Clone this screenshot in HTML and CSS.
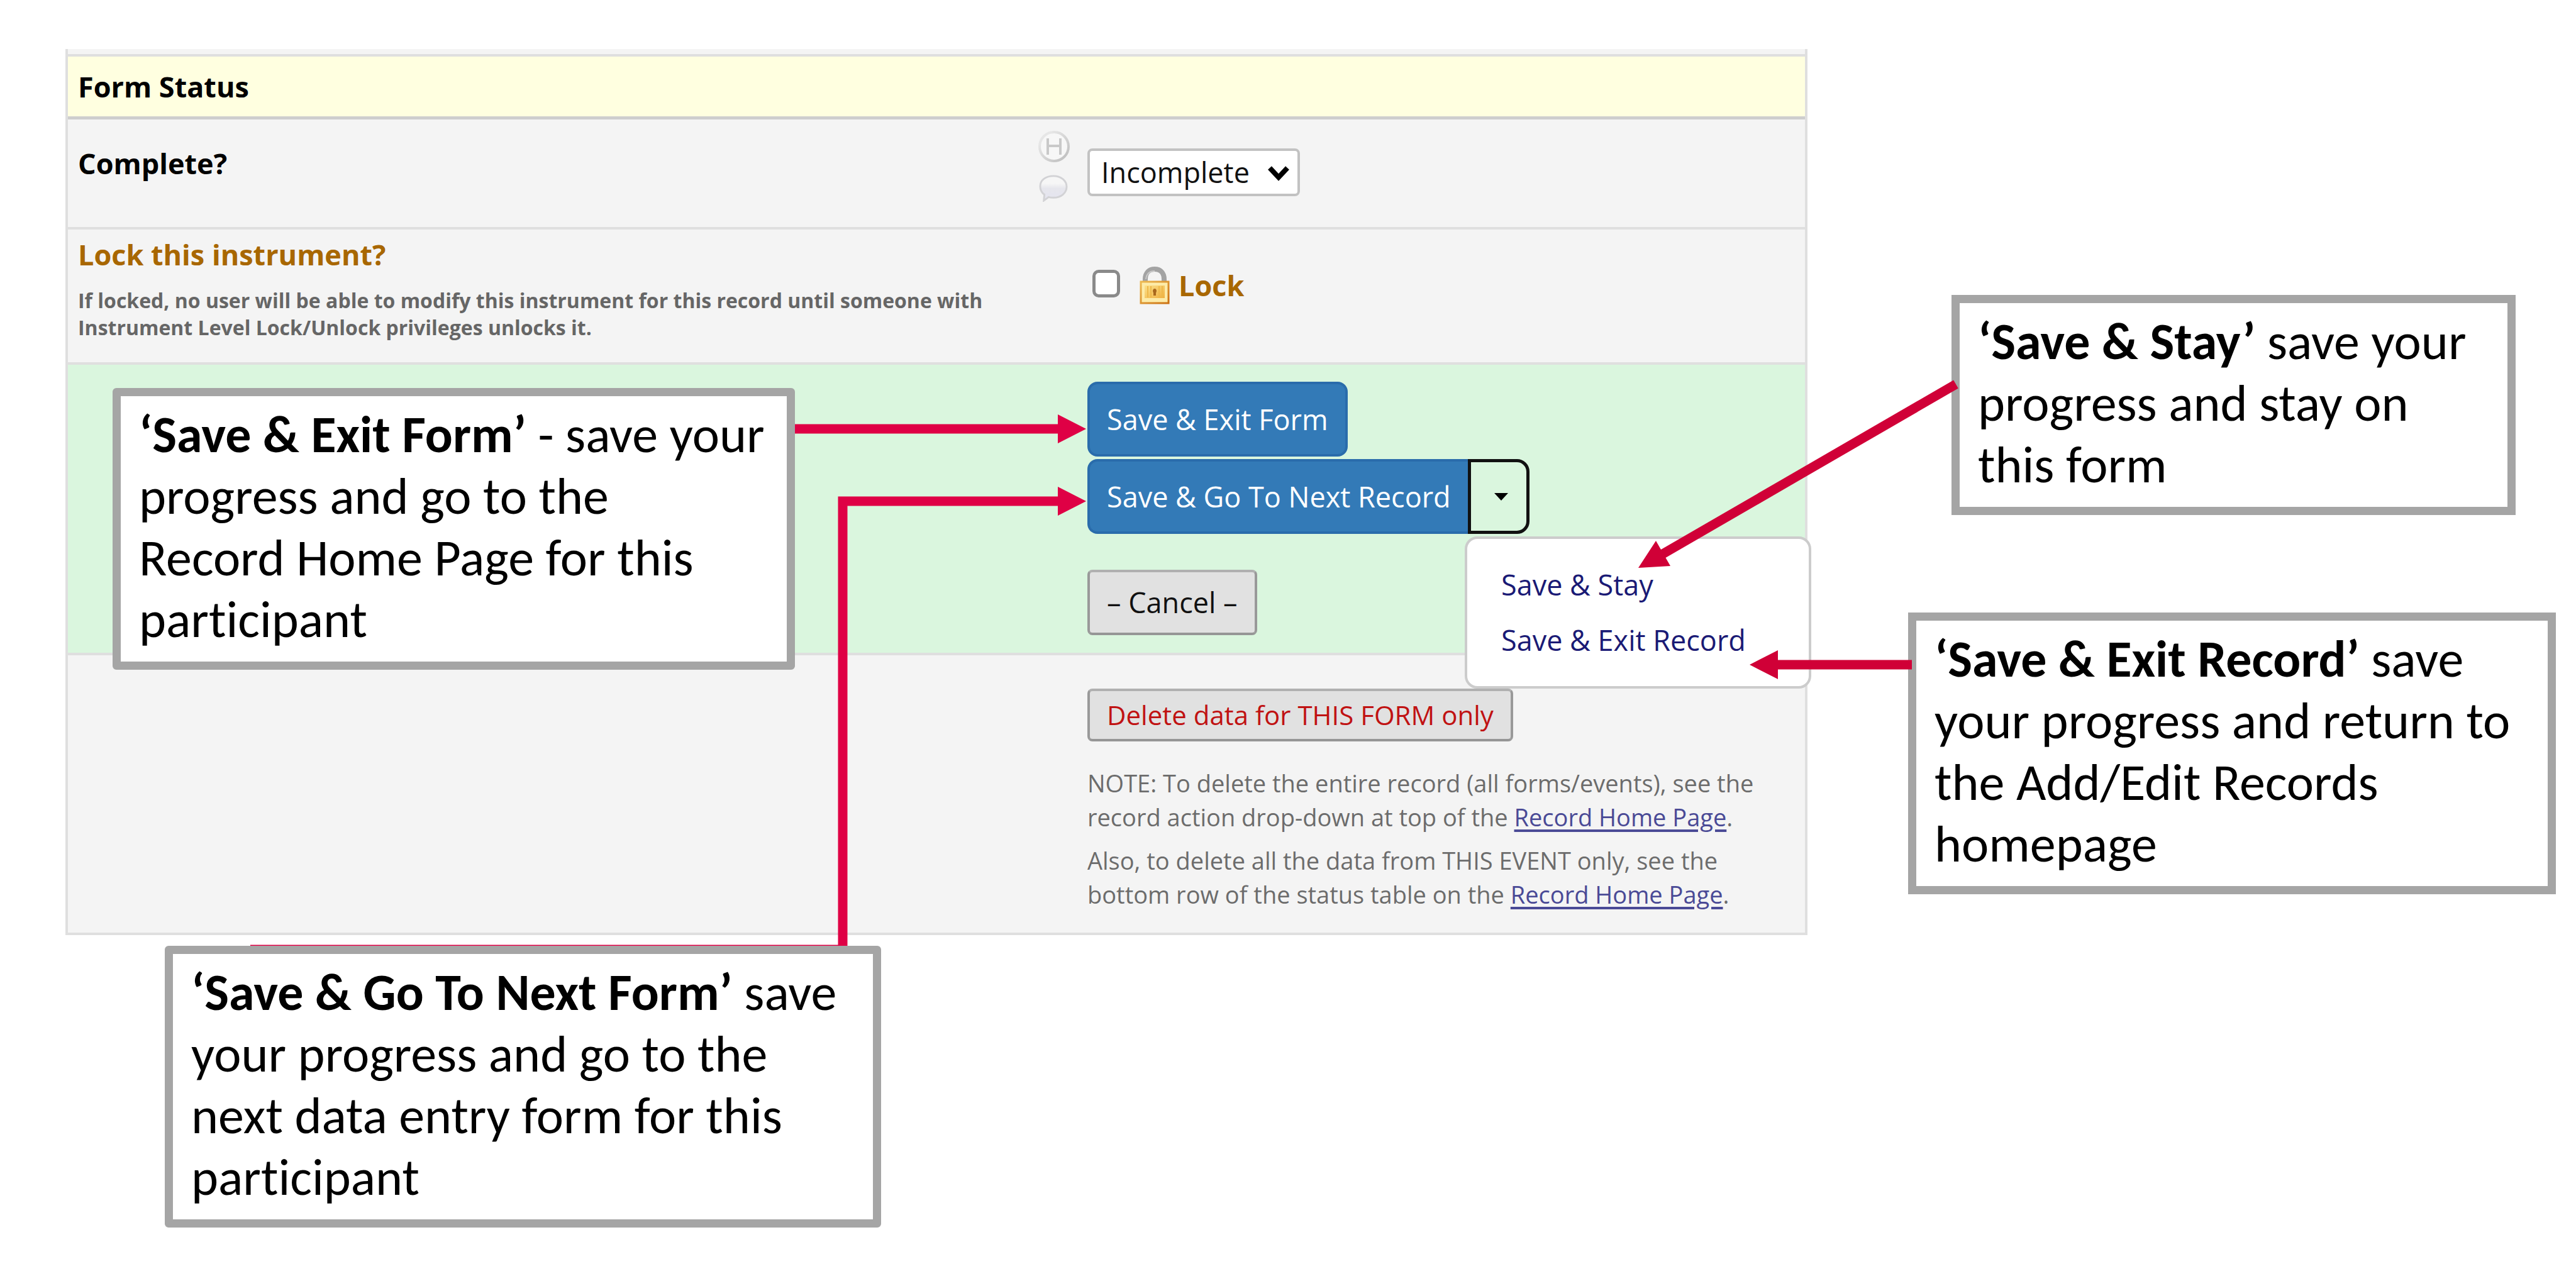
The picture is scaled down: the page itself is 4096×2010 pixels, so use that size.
FILE: index.html
```html
<!DOCTYPE html>
<html lang="en">
<head>
<meta charset="utf-8">
<title>Form Status</title>
<link rel="stylesheet" href="styles.css">
</head>
<body>
<main class="slide">
  <form class="panel">
    <div class="stub"></div>
    <h2 class="row section">Form Status</h2>

    <div class="row status-row">
      <div class="label-cell">
        <label class="label" for="status">Complete?</label>
        <div class="icons">
          <svg class="icon-history" viewBox="0 0 50 50" aria-hidden="true">
            <defs><linearGradient id="ring" x1="0" y1="0" x2="1" y2="1"><stop offset="0.2" stop-color="#e6e6e6"/><stop offset="1" stop-color="#bcbcbc"/></linearGradient></defs>
            <circle cx="25" cy="25" r="23" fill="#f7f7f7" stroke="url(#ring)" stroke-width="4"/>
            <path d="M15 12v26M35 12v26M15 24h20" fill="none" stroke="#c9c9c9" stroke-width="4"/>
          </svg>
          <svg class="icon-comment" viewBox="0 0 50 46" aria-hidden="true">
            <defs><linearGradient id="bubble" x1="0" y1="0" x2="0" y2="1"><stop offset="0.3" stop-color="#f6f6f6"/><stop offset="0.5" stop-color="#e6e6ec"/><stop offset="1" stop-color="#e4e4f0"/></linearGradient></defs>
            <path d="M25 3C12 3 3 10 3 20c0 6 3 11 7 14l-1 10 8-6c3 1 5 1 8 1 13 0 22-8 22-18S38 3 25 3z" fill="url(#bubble)" stroke="#d2d2d5" stroke-width="3"/>
          </svg>
        </div>
      </div>
      <div class="select-wrap">
        <select id="status" class="select"><option>Incomplete</option></select>
        <svg class="chevron" viewBox="0 0 36 26" aria-hidden="true"><path d="M4 5l14 15L32 5" fill="none" stroke="#000" stroke-width="8"/></svg>
      </div>
    </div>

    <div class="row lock-row">
      <div class="lock-text">
        <h3 class="label lock-title">Lock this instrument?</h3>
        <p class="hint">If locked, no user will be able to modify this instrument for this record until someone with<br>Instrument Level Lock/Unlock privileges unlocks it.</p>
      </div>
      <label class="lock-control">
        <input type="checkbox" class="check">
        <svg class="icon-lock" viewBox="0 0 48 60" aria-hidden="true">
          <defs>
            <linearGradient id="brass" x1="0" y1="0" x2="1" y2="1"><stop offset="0" stop-color="#fbe08a"/><stop offset="1" stop-color="#f0b040"/></linearGradient>
            <linearGradient id="edge" x1="0" y1="0" x2="1" y2="1"><stop offset="0" stop-color="#edb951"/><stop offset="1" stop-color="#cc7212"/></linearGradient>
          </defs>
          <path d="M9 28V20C9 10 15 4 24 4s15 6 15 16v8" fill="none" stroke="#a3a3a3" stroke-width="8"/>
          <path d="M10 20C11 11 16 7 24 7" fill="none" stroke="#c9c9c9" stroke-width="2"/>
          <rect x="2" y="24" width="44" height="34" fill="#fdeba8" stroke="url(#edge)" stroke-width="3"/>
          <rect x="8" y="30" width="32" height="20" fill="url(#brass)"/>
          <path d="M13 31v18M18 31v18M31 31v18M36 31v18" stroke="#eeb94a" stroke-width="2"/>
          <path d="M24 35c2 0 3 2 3 4l-1 3v4h-4v-4l-1-3c0-2 1-4 3-4z" fill="#a8681c"/>
        </svg>
        <span class="label">Lock</span>
      </label>
    </div>

    <div class="row save-row">
      <div class="actions">
        <button type="button" class="btn primary">Save &amp; Exit Form</button>
        <div class="split">
          <button type="button" class="btn primary split-main">Save &amp; Go To Next Record</button>
          <button type="button" class="toggle" aria-label="More save options">
            <svg class="caret" viewBox="0 0 22 12" aria-hidden="true"><path d="M0 0h22L11 12z"/></svg>
          </button>
          <nav class="menu">
            <a href="#stay">Save &amp; Stay</a>
            <a href="#exit">Save &amp; Exit Record</a>
          </nav>
        </div>
        <button type="button" class="btn plain cancel">– Cancel –</button>
      </div>
    </div>

    <div class="row delete-row">
      <div class="delete">
        <button type="button" class="btn plain danger">Delete data for THIS FORM only</button>
        <p class="note">NOTE: To delete the entire record (all forms/events), see the<br>record action drop-down at top of the <a href="#home">Record Home Page</a>.</p>
        <p class="note">Also, to delete all the data from THIS EVENT only, see the<br>bottom row of the status table on the <a href="#home">Record Home Page</a>.</p>
      </div>
    </div>
  </form>

  <aside class="side-notes">
    <p class="callout stay"><b>‘Save &amp; Stay’</b> save your<br>progress and stay on<br>this form</p>
    <p class="callout"><b>‘Save &amp; Exit Record’</b> save<br>your progress and return to<br>the Add/Edit Records<br>homepage</p>
  </aside>

  <svg class="arrows" viewBox="0 0 4096 2010" preserveAspectRatio="xMinYMin meet" aria-hidden="true">
    <g fill="none" stroke="#df0045" stroke-width="15">
      <path d="M1250 682H1690"/>
      <path d="M398 1510H1340V797H1690"/>
    </g>
    <path d="M1727 682l-45-23v46zM1727 797l-45-23v46z" fill="#df0045"/>
    <g fill="none" stroke="#d00037" stroke-width="15">
      <path d="M3110 611L2642 882"/>
      <path d="M3040 1057H2820"/>
    </g>
    <path d="M2605 903L2633 860L2656 900zM2782 1057l45-23v46z" fill="#d00037"/>
  </svg>

  <p class="callout over exit-form"><b>‘Save &amp; Exit Form’</b> - save your<br>progress and go to the<br>Record Home Page for this<br>participant</p>
  <p class="callout over next-form"><b>‘Save &amp; Go To Next Form’</b> save<br>your progress and go to the<br>next data entry form for this<br>participant</p>
</main>
</body>
</html>
```

FILE: styles.css
```css
* { box-sizing: border-box; }

body {
  margin: 0;
  background: #fff;
  color: #000;
  font-family: "Open Sans", "Noto Sans", sans-serif;
  font-size: 45px;
  line-height: 60px;
}

h2, h3, p { margin: 0; }
button, select { font: inherit; }

.slide {
  position: relative;
  display: grid;
  grid-template-columns: 2770fr 1190fr;
  align-items: start;
  min-height: 100vh;
  padding: 78px 32px 0 104px;
}

/* Form panel */
.panel {
  border: 4px solid #dfdfdf;
  border-top: 0;
  background: #f4f4f4;
}
.stub { height: 8px; }
.row {
  display: grid;
  grid-template-columns: 1621fr 1141fr;
  align-items: start;
  border-top: 4px solid #dfdfdf;
}
.section {
  padding: 18px 16px 17px;
  background: #ffffe0;
  font-size: 45px;
  font-weight: 700;
}
.label { font-size: 45px; font-weight: 700; }

.status-row {
  padding: 18px 0 40px;
  border-top: 5px solid #cecece;
}
.label-cell {
  display: flex;
  justify-content: space-between;
  padding: 0 28px 0 16px;
}
.label-cell .label { padding-top: 22px; }
.icons {
  display: flex;
  flex-direction: column;
  gap: 19px;
}
.icon-history { width: 50px; height: 50px; }
.icon-comment { width: 48px; height: 44px; }
.select-wrap {
  position: relative;
  width: 338px;
  margin-top: 28px;
}
.select {
  display: block;
  width: 100%;
  height: 76px;
  padding: 0 18px;
  border: 4px solid #c2c2c2;
  border-radius: 8px;
  background: #fff;
  color: #111;
  appearance: none;
}
.chevron {
  position: absolute;
  top: 26px;
  right: 16px;
  width: 36px;
  height: 26px;
  pointer-events: none;
}

.lock-row { color: #a86700; }
.lock-text { padding: 10px 16px 34px; }
.hint {
  margin-top: 21px;
  color: #666;
  font-size: 32px;
  font-weight: 700;
  line-height: 43px;
}
.lock-control {
  display: flex;
  align-items: center;
  padding: 59px 0 0 8px;
}
.check {
  width: 44px;
  height: 44px;
  margin: 0 31px 6px 0;
  border: 5px solid #8a8a8a;
  border-radius: 10px;
  background: #fff;
  appearance: none;
}
.icon-lock {
  width: 48px;
  height: 60px;
  margin-right: 14px;
}

.save-row { background: #daf6de; }
.actions {
  grid-column: 2;
  display: flex;
  flex-direction: column;
  align-items: flex-start;
  padding: 27px 0 28px;
}
.btn {
  padding: 0 27px;
  border: 4px solid;
  white-space: nowrap;
}
.primary {
  height: 119px;
  border-color: #2a6cab;
  border-radius: 16px;
  background: #337ab7;
  color: #fff;
}
.split {
  position: relative;
  display: flex;
  margin-top: 4px;
}
.split-main {
  border-right: 0;
  border-radius: 16px 0 0 16px;
}
.toggle {
  display: flex;
  align-items: center;
  justify-content: center;
  width: 98px;
  padding: 0 0 0 8px;
  border: 5px solid #111;
  border-radius: 0 20px 20px 0;
  background: transparent;
}
.caret { width: 22px; height: 12px; }
.menu {
  position: absolute;
  top: 123px;
  left: 600px;
  width: 551px;
  padding: 29px 54px;
  border: 4px solid #ccc;
  border-radius: 20px;
  background: #fff;
}
.menu a {
  display: block;
  color: #1a1a75;
  line-height: 88px;
  text-decoration: none;
  white-space: nowrap;
}
.plain {
  border-color: #b0b0b0 #999 #969696;
  border-radius: 8px;
  background: #e1e1e1;
}
.cancel { height: 104px; margin-top: 57px; color: #111; }

.delete {
  grid-column: 2;
  padding: 53px 0 34px;
}
.danger {
  display: block;
  height: 84px;
  margin-bottom: 39px;
  color: #c01212;
  font-size: 42px;
}
.note {
  color: #6c6c6c;
  font-size: 38px;
  line-height: 54px;
  white-space: nowrap;
}
.note + .note { margin-top: 15px; }
.note a {
  color: #4a4a96;
  text-decoration-thickness: 4px;
  text-underline-offset: 5px;
}

/* Callouts */
.side-notes {
  display: flex;
  flex-direction: column;
  gap: 155px;
  padding: 391px 0 0 160px;
}
.callout {
  padding: 12px 29px 18px;
  border: 13px solid #a5a5a5;
  background: #fff;
  font-family: Carlito, Lato, sans-serif;
  font-size: 82px;
  font-variant-ligatures: none;
  line-height: 98px;
  white-space: nowrap;
}
.stay { margin: 0 64px 0 69px; }
.over {
  position: absolute;
  border-radius: 6px;
}
.exit-form { top: 617px; left: 179px; width: 1085px; }
.next-form { top: 1504px; left: 262px; width: 1139px; }
.arrows {
  position: absolute;
  inset: 0;
  width: 100%;
  height: 100%;
  pointer-events: none;
}
```
